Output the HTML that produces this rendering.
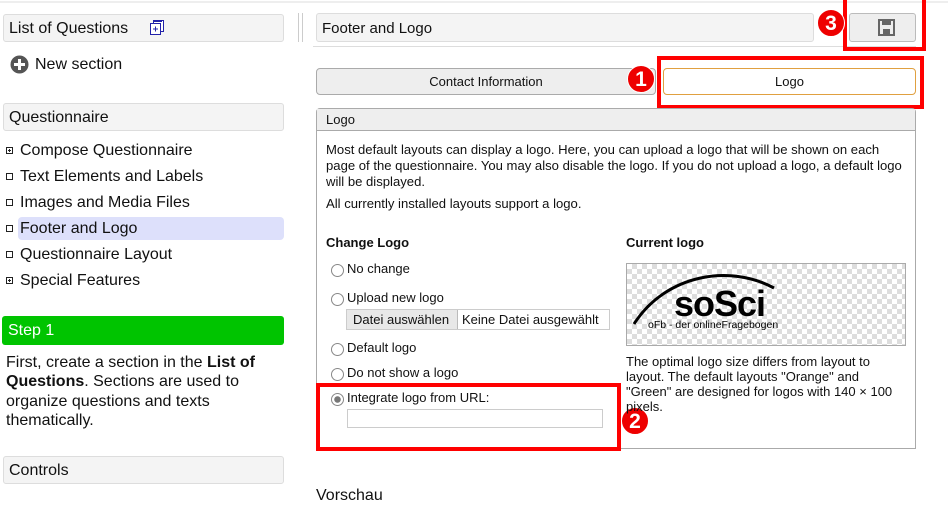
<!DOCTYPE html>
<html><head><meta charset="utf-8"><style>
*{margin:0;padding:0;box-sizing:border-box}
body{width:948px;height:494px;overflow:hidden;background:#fff;font-family:"Liberation Sans",Arial,sans-serif;color:#111;position:relative}
.a{position:absolute;white-space:nowrap}
.hdr{position:absolute;background:#f4f4f4;border:1px solid #ddd;border-radius:3px;font-size:16px;padding:5px 0 0 5px}
.item{position:absolute;left:20px;font-size:16px}
.bx{position:absolute;left:6px;width:7px;height:7px;border:1px solid #222}
.bx.p::after{content:"";position:absolute;left:1px;top:2px;width:3px;height:1px;background:#222}
.bx.p::before{content:"";position:absolute;left:2px;top:1px;width:1px;height:3px;background:#222}
.s{font-size:13px}
.rad{position:absolute;width:13px;height:13px;border:1px solid #888;border-radius:50%;background:#fff}
.red{position:absolute;border:4px solid #f00}
.num{position:absolute;width:28px;height:28px;border-radius:50%;background:#e00;color:#fff;font-weight:bold;font-size:21px;text-align:center;line-height:28px;border:1px solid #fff}
</style></head><body>
<div class="a" style="left:0;top:1px;width:948px;height:2px;background:#eee"></div>

<div class="hdr" style="left:3px;top:14px;width:281px;height:28px">List of Questions
<svg style="position:absolute;left:146px;top:5px" width="15" height="15" viewBox="0 0 15 15"><rect x="3.5" y="0.5" width="10" height="11" fill="#fff" stroke="#22a"/><rect x="0.5" y="3.5" width="10" height="11" fill="#fff" stroke="#22a"/><path d="M3 9h5M5.5 6.5v5M4 1.5h8" stroke="#22a"/></svg></div>
<svg class="a" style="left:10px;top:55px" width="19" height="19" viewBox="0 0 19 19"><circle cx="9.5" cy="9.5" r="9" fill="#555"/><path d="M9.5 4v11M4 9.5h11" stroke="#fff" stroke-width="3"/></svg>
<div class="a" style="left:35px;top:56px;font-size:16px">New section</div>

<div class="hdr" style="left:3px;top:103px;width:281px;height:28px">Questionnaire</div>
<div class="a" style="left:18px;top:217px;width:266px;height:23px;background:#dde0fb;border-radius:4px"></div>
<div class="bx p" style="top:147px"></div><div class="item" style="top:142px">Compose Questionnaire</div>
<div class="bx" style="top:173px"></div><div class="item" style="top:168px">Text Elements and Labels</div>
<div class="bx" style="top:199px"></div><div class="item" style="top:194px">Images and Media Files</div>
<div class="bx" style="top:225px"></div><div class="item" style="top:220px">Footer and Logo</div>
<div class="bx" style="top:251px"></div><div class="item" style="top:246px">Questionnaire Layout</div>
<div class="bx p" style="top:277px"></div><div class="item" style="top:272px">Special Features</div>

<div class="a" style="left:2px;top:316px;width:282px;height:29px;background:#00c400;border-radius:3px;color:#fff;font-size:16px;padding:6px 0 0 6px">Step 1</div>
<div class="a" style="left:6px;top:353px;font-size:16px;line-height:19.3px;white-space:normal;width:270px">First, create a section in the <b>List of Questions</b>. Sections are used to organize questions and texts thematically.</div>
<div class="hdr" style="left:3px;top:456px;width:281px;height:28px">Controls</div>

<div class="a" style="left:298px;top:13px;width:1px;height:29px;background:#ccc"></div>
<div class="a" style="left:302px;top:13px;width:1px;height:29px;background:#ccc"></div>

<div class="hdr" style="left:316px;top:13px;width:498px;height:29px;font-size:15px;padding-top:6px">Footer and Logo</div>
<div class="a" style="left:313px;top:46px;width:603px;height:1px;background:#ddd"></div>
<div class="a" style="left:849px;top:13px;width:67px;height:29px;background:#eee;border:1px solid #bbb;border-radius:3px"></div>
<svg class="a" style="left:878px;top:19px" width="17" height="17" viewBox="0 0 17 17"><path d="M1 1h15v15H1z" fill="none" stroke="#666" stroke-width="2"/><rect x="4" y="1" width="9" height="5" fill="#666"/><rect x="5" y="10" width="7" height="6" fill="#666"/></svg>
<div class="red" style="left:843px;top:-4px;width:83px;height:55px"></div>
<div class="num" style="left:817px;top:9px">3</div>

<div class="a s" style="left:316px;top:68px;width:340px;height:27px;background:#eee;border:1px solid #aaa;border-radius:4px;text-align:center;line-height:25px">Contact Information</div>
<div class="a s" style="left:663px;top:68px;width:253px;height:27px;background:#fff;border:1px solid #e0a040;border-radius:4px;text-align:center;line-height:25px">Logo</div>
<div class="red" style="left:657px;top:56px;width:267px;height:53px"></div>
<div class="num" style="left:627px;top:65px">1</div>

<div class="a" style="left:316px;top:108px;width:600px;height:341px;border:1px solid #aaa;border-radius:4px 4px 0 0"></div>
<div class="a s" style="left:317px;top:109px;width:598px;height:22px;background:#eee;border-bottom:1px solid #aaa;padding:3px 0 0 9px">Logo</div>
<div class="a" style="left:326px;top:142px;line-height:16px;font-size:13.1px">Most default layouts can display a logo. Here, you can upload a logo that will be shown on each<br>page of the questionnaire. You may also disable the logo. If you do not upload a logo, a default logo<br>will be displayed.</div>
<div class="a" style="left:326px;top:196px;font-size:13.1px">All currently installed layouts support a logo.</div>

<div class="a s" style="left:326px;top:235px;font-weight:bold">Change Logo</div>
<div class="a s" style="left:626px;top:235px;font-weight:bold">Current logo</div>
<div class="rad" style="left:331px;top:264px"></div><div class="a s" style="left:347px;top:261px">No change</div>
<div class="rad" style="left:331px;top:293px"></div><div class="a s" style="left:347px;top:290px">Upload new logo</div>
<div class="a s" style="left:346px;top:309px;width:264px;height:21px;border:1px solid #ccc"></div>
<div class="a s" style="left:347px;top:310px;width:111px;height:19px;background:#e8e8e8;border-right:1px solid #bbb;padding:2px 0 0 6px">Datei auswählen</div>
<div class="a s" style="left:462px;top:312px">Keine Datei ausgewählt</div>
<div class="rad" style="left:331px;top:343px"></div><div class="a s" style="left:347px;top:340px">Default logo</div>
<div class="rad" style="left:331px;top:368px"></div><div class="a s" style="left:347px;top:365px">Do not show a logo</div>
<div class="rad" style="left:331px;top:393px;background:radial-gradient(circle,#777 3px,#fff 3.5px)"></div><div class="a s" style="left:347px;top:390px">Integrate logo from URL:</div>
<div class="a" style="left:347px;top:409px;width:256px;height:19px;border:1px solid #ccc"></div>
<div class="red" style="left:316px;top:383px;width:305px;height:68px"></div>
<div class="num" style="left:621px;top:407px">2</div>

<div class="a" style="left:626px;top:263px;width:280px;height:83px;border:1px solid #aaa;background-color:#fff;background-image:linear-gradient(45deg,#ddd 25%,transparent 25%,transparent 75%,#ddd 75%),linear-gradient(45deg,#ddd 25%,transparent 25%,transparent 75%,#ddd 75%);background-size:10px 10px;background-position:0 0,5px 5px"></div>
<svg class="a" style="left:630px;top:268px" width="170" height="70" viewBox="0 0 170 70"><path d="M4 56C36 6 100 -4 144 20" fill="none" stroke="#000" stroke-width="3"/><text x="44" y="48" font-family="Liberation Sans" font-weight="bold" font-size="36" fill="#000" letter-spacing="-1">soSci</text><text x="18" y="60" font-family="Liberation Sans" font-size="10.5" fill="#000">oFb - der onlineFragebogen</text></svg>
<div class="a s" style="left:626px;top:354px;line-height:15px">The optimal logo size differs from layout to<br>layout. The default layouts "Orange" and<br>"Green" are designed for logos with 140 × 100<br>pixels.</div>

<div class="a" style="left:316px;top:487px;font-size:16px">Vorschau</div>
</body></html>
